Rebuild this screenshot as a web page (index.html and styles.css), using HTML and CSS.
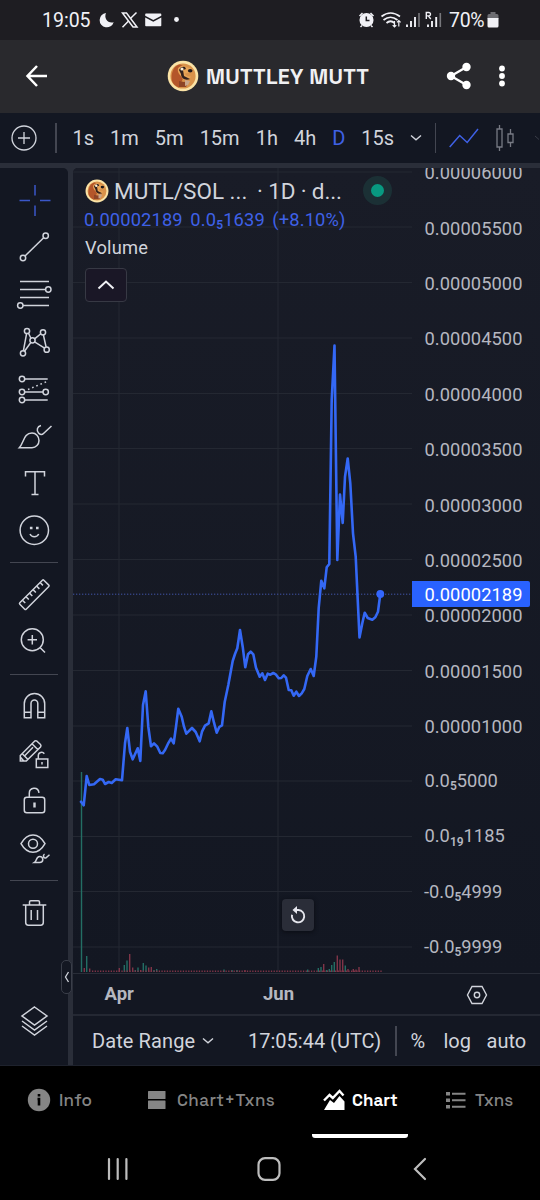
FILE: index.html
```html
<!DOCTYPE html>
<html lang="en">
<head>
<meta charset="utf-8">
<title>MUTTLEY MUTT</title>
<link rel="stylesheet" href="styles.css">
</head>
<body>
<svg class="defs" width="0" height="0" aria-hidden="true">
  <symbol id="coin" viewBox="0 0 32 32">
    <circle cx="16" cy="16" r="15.300" fill="#fbe3a6"/>
    <circle cx="16" cy="16" r="12.600" fill="#d9924a"/>
    <path d="M5 21C3.500 13 7 5 13 4.500l4 2-4 6 3 6-4 9C8 26 6 24 5 21z" fill="#b4562a"/>
    <path d="M11 8.500c2-3 6-3.500 8-1.500l5 1.500c2 1 1 4-1 4l-5 1c1 3 4 3 6 3-2 4-7 5-9 1-2-3-5-5-4-9z" fill="#e9a557"/>
    <path d="M12 10c1-3 4-4 6-3l1 2-3 1 1 6 6 3c-5 2-9-1-9-5z" fill="#33201c"/>
    <ellipse cx="23.200" cy="10.800" rx="2.300" ry="1.700" fill="#21191b"/>
    <circle cx="15" cy="9" r="1.600" fill="#fff1d6"/>
    <path d="M12 21l5 1 5-1-3 6h-7z" fill="#8e4426"/>
    <path d="M18 20l5 1-2 4-3 1z" fill="#c9a68c"/>
  </symbol>
</svg>

<header class="status">
  <span class="clock">19:05</span>
  <svg class="status-left" width="84" height="20" viewBox="98 10 84 20" fill="#f1f1f6">
    <path d="M106 13a7.200 7.200 0 1 0 7.700 9.300c-6 1.500-10-4-7.700-9.300z"/>
    <path d="M122.500 13h4l10.500 14h-4z" fill="none" stroke="#f1f1f6" stroke-width="1.500"/>
    <path d="M136.500 12.500l-6.300 6.300M128.300 21.200l-5.800 6" stroke="#f1f1f6" stroke-width="1.500"/>
    <path d="M146 13.500h14.500q.8 0 .8.800v1.500l-8 4.300-8.100-4.300v-1.500q0-.8.800-.8zM145.200 17.500l8.100 4.200 8-4.200v8q0 .8-.8.800H146q-.8 0-.8-.8z"/>
    <circle cx="176.500" cy="19.500" r="2.400"/>
  </svg>
  <svg class="status-right" width="86" height="22" viewBox="356 9 86 22" fill="none" stroke="#f1f1f6" stroke-width="1.500">
    <circle cx="366.500" cy="20" r="6.300" fill="#f1f1f6"/>
    <path d="M359.500 16l3-3M373.500 16l-3-3M362 25.500l-1.500 1.500M371 25.500l1.500 1.500"/>
    <path d="M366.300 16.500v4h3.200" stroke="#1e1d22"/>
    <path d="M381.500 16.500q9-7 18.500 0M383.500 20q7-5.500 14 0M386.500 23q4-3.500 8 0" stroke-width="1.700"/>
    <path d="M394.500 21v6m-1.800-1.800 1.800 1.800 1.800-1.800M398.800 26.500v-6m-1.800 1.800 1.800-1.800 1.800 1.800" stroke-width="1.200"/>
    <path d="M407 24.500V27M411 21v6M415 17v10" stroke-width="1.900"/><path d="M419 13v14" stroke="#77777c" stroke-width="1.600"/>
    <path d="M428 24.500V27M432 21v6M436.200 17v10" stroke-width="1.900"/><path d="M440.300 13v14" stroke="#77777c" stroke-width="1.600"/>
    <path d="M426.300 19v-6.500h2.500a1.700 1.700 0 0 1 0 3.400h-2.500m2 0 2.500 3.100" stroke-width="1.400"/>
  </svg>
  <span class="battery">70%</span>
  <svg width="12" height="18" viewBox="0 0 12 18"><path d="M3.500 1h5v2H10q1.500 0 1.500 1.500V8H.5V4.500Q.5 3 2 3h1.500z" fill="#6d6d72"/><path d="M.5 7h11v8q0 1.500-1.500 1.500H2Q.5 16.500.5 15z" fill="#f1f1f6"/></svg>
</header>

<div class="titlebar">
  <svg class="back" width="24" height="24" viewBox="0 0 24 24" fill="none" stroke="#fff" stroke-width="2.500"><path d="M22 12H3M12 2 2.500 12 12 22"/></svg>
  <div class="token"><svg width="32" height="32"><use href="#coin"/></svg><h1>MUTTLEY MUTT</h1></div>
  <svg class="share" width="26" height="28" viewBox="0 0 26 28" fill="#fff"><path d="M20.500 5 5 14l15.500 9" fill="none" stroke="#fff" stroke-width="2.300"/><circle cx="20.500" cy="5" r="4.200"/><circle cx="5" cy="14" r="4.200"/><circle cx="20.500" cy="23" r="4.200"/></svg>
  <svg class="more" width="8" height="24" viewBox="0 0 8 24" fill="#fff"><circle cx="4" cy="4.500" r="2.900"/><circle cx="4" cy="12" r="2.900"/><circle cx="4" cy="19.500" r="2.900"/></svg>
</div>

<nav class="intervals">
  <svg class="add" width="28" height="28" viewBox="0 0 28 28" fill="none" stroke="#d1d4dc" stroke-width="1.300"><circle cx="14" cy="14" r="12"/><path d="M14 8v12M8 14h12"/></svg>
  <i class="rule"></i>
  <div class="interval-list">
    <span>1s</span><span>1m</span><span>5m</span><span>15m</span><span>1h</span><span>4h</span><span class="on">D</span><span>15s</span>
  </div>
  <svg class="caret" width="12" height="8" viewBox="0 0 12 8" fill="none" stroke="#d1d4dc" stroke-width="1.400"><path d="M1 1.500 6 5.800l5-4.300"/></svg>
  <i class="rule"></i>
  <svg class="line-type" width="30" height="20" viewBox="0 0 30 20" fill="none" stroke="#3f61e6" stroke-width="1.500"><path d="m.7 19 10-11.500 7.500 7L29 1"/></svg>
  <svg class="candles" width="22" height="28" viewBox="0 0 22 28" fill="none" stroke="#777a84" stroke-width="1.300"><path d="M3 5h5v18H3zM5.500 1v4M5.500 23v4M14 10h5v8.500h-5zM16.500 5v5M16.500 18.500V23"/></svg>
  <svg class="cut-caret" width="6" height="6" viewBox="0 0 6 6" fill="none" stroke="#3a3d48"><path d="m1 1 4 3.500"/></svg>
</nav>

<main class="workspace">
  <aside class="tools">
    <div class="group">
      <svg viewBox="0 0 40 40" class="blue"><path d="M21 5v10.500M21 25.500V36M5.500 20.500H16M26 20.500h10.500"/></svg>
      <svg viewBox="0 0 40 40"><path d="M11 29 29.700 10.700"/><circle cx="9" cy="31" r="2.700"/><circle cx="31.700" cy="8.700" r="2.700"/></svg>
      <svg viewBox="0 0 40 40"><path d="M6 7.500h29M6 15.500h25.600M6 23.500h29M9 31.500h26"/><circle cx="34.300" cy="15.500" r="2.700"/><circle cx="6.300" cy="31.500" r="2.700"/></svg>
      <svg viewBox="0 0 40 40"><path d="M9.400 28.600 12.600 11.700M14.500 11.200l2.300 4.800M20.600 16.900l6.200-5.200M29.400 13l2.700 12M20.600 19.800l10 6.300M16.800 20.500l-6.300 8.700"/><circle cx="13" cy="9" r="2.600"/><circle cx="29" cy="10.300" r="2.600"/><circle cx="18.500" cy="18.300" r="2.600"/><circle cx="9" cy="31.300" r="2.600"/><circle cx="32.700" cy="27.700" r="2.600"/></svg>
      <svg viewBox="0 0 40 40"><path d="M10.700 10h23M10.700 23H29M10.700 31h23"/><circle cx="8" cy="10" r="2.700"/><circle cx="8" cy="23" r="2.700"/><circle cx="31.700" cy="23" r="2.700"/><circle cx="8" cy="31" r="2.700"/><path d="M14 20.500 33 12.500" stroke-dasharray="1.600 2.900"/></svg>
      <svg viewBox="0 0 40 40"><path d="M5.300 31.700C10 27 9.500 17 18 17c4 0 7 3.500 7 7.500 0 4-3 7.200-7 7.200zM27 9.500c-4 1-4.700 4.800-2.500 7.500 1.500 1.800 3.500 2 5 .5L37.500 10"/></svg>
      <svg viewBox="0 0 40 40"><path d="M11.500 13.500V8.700h19v4.800M21 8.700v22.800M17.500 31.500h7"/></svg>
      <svg viewBox="0 0 40 40"><circle cx="20.300" cy="20.300" r="14.200"/><path d="M16 24c1.500 3.500 7.200 3.500 8.700 0"/><path d="M15.900 18h2.600M22 18h2.600" stroke-width="2.600"/></svg>
    </div>
    <i class="divider"></i>
    <div class="group second">
      <svg viewBox="0 0 40 40"><g transform="rotate(-45 20.300 19.700)"><rect x="3.300" y="15.200" width="34" height="9" rx="1"/><path d="M8 15.200v4M13 15.200v4M18 15.200v4M23 15.200v4M28 15.200v4M33 15.200v4"/></g></svg>
      <svg viewBox="0 0 40 40"><circle cx="18.300" cy="18.700" r="11"/><path d="m26 26.500 5 5M18.300 14v9.400M13.600 18.700H23"/></svg>
    </div>
    <i class="divider"></i>
    <div class="group third">
      <svg viewBox="0 0 40 40"><path d="M10.300 31.700v-14a10.200 10.200 0 0 1 20.400 0v14h-6.900V17.500a3.400 3.400 0 0 0-6.800 0v14.200zM10.300 26.300H17M23.800 26.300h6.900"/></svg>
      <svg viewBox="0 0 40 40"><path d="M6.300 27v-5.500L20.500 7.200q1.300-1 2.500 0l3.500 3.300q1 1.200 0 2.500L12.300 27zM18 9.800l6 6M8.500 20l5 5M19 13.200 10.500 22M6.300 23l3.500 4"/><path d="M22.300 25h11.500v8.500H22.300zM24.300 25v-3.500a3.300 3.300 0 0 1 6-1.800M28 28v2.500"/></svg>
      <svg viewBox="0 0 40 40"><rect x="10.300" y="16.300" width="20.400" height="15.400" rx="2.500"/><path d="M15.300 16.300v-4c0-6 8.700-7 9.700-.5"/><path d="M20.500 21.500v5" stroke-width="2.400"/></svg>
      <svg viewBox="0 0 40 40"><path d="M7 14.700c6.500-11.500 17.500-11.500 24 0-6.500 11.500-17.500 11.500-24 0z"/><circle cx="19" cy="14.700" r="4.500"/><path d="M20.500 33.500c2.500-1.500 1.500-6 5-6 2 0 3.300 1.500 3.300 3 0 1.800-1.300 3-3.300 3zM30.500 25c-2.200 1.500-.5 5 1.500 3.800l3.500-3"/></svg>
    </div>
    <i class="divider"></i>
    <div class="group fourth">
      <svg viewBox="0 0 40 40"><path d="M8.700 13h23.600M15.500 13v-3q0-1.300 1.300-1.300h7.400q1.300 0 1.300 1.300v3M11.700 13v17.500q0 2.700 2.700 2.700h12.200q2.700 0 2.700-2.700V13M17.200 18v10M23.500 18v10"/></svg>
      <svg viewBox="0 0 40 40" class="layers"><path d="M20.500 6 33 15 20.500 24 8 15zM8 20l12.500 9L33 20M8 25l12.500 9L33 25"/></svg>
    </div>
  </aside>

  <section class="chart-area">
    <div class="plot">
      <svg class="chart" width="467" height="805" viewBox="73 168 467 805">
        <path class="grid" d="M73 172h339M73 227h339M73 282.500h339M73 338h339M73 393.500h339M73 448.500h339M73 504h339M73 559.500h339M73 615h339M73 670.500h339M73 726h339M73 781h339M73 836.500h339M73 891.500h339M73 947h339M119 168v804M278 168v804"/>
        <path class="up" d="M81.500 972V772M86.700 972v-16M124.300 972v-7M127 972v-11.500M135.300 972v-2M138 972v-4.500M143.300 972v-9M146 972v-6.500M154 972v-2M156.700 972v-3M224 972v-2.500M232 972v-2M237 972v-2M307.700 972v-2.500M318.300 972v-4M321 972v-5M326.700 972v-2M329.300 972v-3M331.700 972v-7M334.300 972v-10M345.300 972v-6.500"/>
        <path class="down" d="M84.300 972v-4M89.700 972v-3.500M119.300 972v-4M129.700 972v-18M132.700 972v-4.500M140.700 972v-2M148.700 972v-4.500M151.300 972v-5M245 972v-2M323.700 972v-8M337.300 972v-16.500M340 972v-12.500M342.700 972v-12.500M348 972v-3M353.300 972v-3M356 972v-2.500M359 972v-5"/>
        <path class="down" d="M92 971.300H382" stroke-dasharray="1.300 1.370"/>
        <path class="level" d="M73 594.200h339"/>
        <polyline class="price" points="81,801.700 83.700,805.300 86.700,776 89.300,785 94,784.300 100,779 102.700,779.700 105,784 108.700,782 111.700,783 115.700,779.300 122,780.300 125,743.300 127.300,728 130,751.700 132.700,759.300 137.700,748.300 140.300,761 143,705 145.700,691.300 148.300,726.700 151,746.300 154,743.300 157.300,746.700 160.300,753 162.700,753.300 165,750 168,743.700 171,738.700 173.700,743.300 176,726.700 178.300,708.700 181.700,716.700 184,726.700 186.300,733.700 192,728 195.700,732 199.700,741.300 202,731.700 205,725.700 208.700,723.300 211.300,711.300 214,722.700 216.700,732.700 219.300,727 222,725.300 224.700,702 228.300,685 232.700,661 235,654 237.300,648.300 240,630 242.700,646.700 245.300,667.300 248,654.300 250.700,651.700 253.300,654.300 256,667.700 259.700,676.700 262.300,673.300 265,680 267.700,673.700 270.300,674.700 273.300,673 275.700,674.300 278.700,678.300 281.300,678 283.700,675.300 286,677.700 288.700,690 291.300,690.300 293.700,695.700 296.300,691.700 299,696 301.700,693.300 304.300,689 307.300,676 310.700,669 313.700,676 316.300,656.700 318.700,608 321.300,580.700 324.300,588.300 326.700,567.300 329.300,564 331.700,400 334.500,345.500 337.300,560 340,494.500 342.700,523 345,476.700 347.700,458.500 350.300,483.300 353,533.300 355.700,556.700 359.500,637.500 362.300,623.300 364.700,612.700 367.700,618 372.300,619.700 375.300,617.300 378,611.700 380.300,594"/>
        <circle cx="380.300" cy="594" r="3.900" fill="#3366ff"/>
        <g class="axis">
          <text x="424.500" y="179" textLength="98">0.00006000</text>
          <text x="424.500" y="234.500" textLength="98">0.00005500</text>
          <text x="424.500" y="290" textLength="98">0.00005000</text>
          <text x="424.500" y="345" textLength="98">0.00004500</text>
          <text x="424.500" y="400.500" textLength="98">0.00004000</text>
          <text x="424.500" y="456" textLength="98">0.00003500</text>
          <text x="424.500" y="511.500" textLength="98">0.00003000</text>
          <text x="424.500" y="567" textLength="98">0.00002500</text>
          <text x="424.500" y="622" textLength="98">0.00002000</text>
          <text x="424.500" y="677.500" textLength="98">0.00001500</text>
          <text x="424.500" y="733" textLength="98">0.00001000</text>
          <text x="424.500" y="786.500">0.0<tspan class="sub" dy="3.500">5</tspan><tspan dy="-3.500">5000</tspan></text>
          <text x="424.500" y="842">0.0<tspan class="sub" dy="3.500">19</tspan><tspan dy="-3.500">1185</tspan></text>
          <text x="424" y="897.500">-0.0<tspan class="sub" dy="3.500">5</tspan><tspan dy="-3.500">4999</tspan></text>
          <text x="424" y="952.500">-0.0<tspan class="sub" dy="3.500">5</tspan><tspan dy="-3.500">9999</tspan></text>
          <path d="M412 581h116q2 0 2 2v22q0 2-2 2H412z" fill="#2962ff"/>
          <text x="424.500" y="601" textLength="98" class="current">0.00002189</text>
        </g>
      </svg>
      <div class="legend">
        <div class="pair">
          <svg width="24" height="24"><use href="#coin"/></svg>
          <span class="symbol">MUTL/SOL ...</span><span class="detail">· 1D · d...</span>
          <i class="live"></i>
        </div>
        <div class="values"><span>0.00002189</span><span>0.0<small>5</small>1639</span><span>(+8.10%)</span></div>
        <div class="volume">Volume</div>
        <div class="collapse"><svg width="18" height="10" viewBox="0 0 18 10" fill="none" stroke="#f0f1f5" stroke-width="2"><path d="m1.500 8.500 7.500-7 7.500 7"/></svg></div>
      </div>
      <div class="reset"><svg width="18" height="18" viewBox="0 0 18 18" fill="none" stroke="#e6e7ee" stroke-width="1.900"><path d="M3 8.800A6.200 6.200 0 1 0 9.500 4H6"/><path d="M8 0v8L3.500 4z" fill="#e6e7ee" stroke="none"/></svg></div>
    </div>
    <div class="timeline">
      <b>Apr</b><b>Jun</b>
      <svg width="22" height="20" viewBox="0 0 22 20" fill="none" stroke="#d1d4dc" stroke-width="1.400"><path d="M6 1.500h10L20.500 10 16 18.500H6L1.500 10z"/><circle cx="11" cy="10" r="2.700"/></svg>
    </div>
    <div class="range">
      <span class="date">Date Range</span>
      <svg width="12" height="8" viewBox="0 0 12 8" fill="none" stroke="#d1d4dc" stroke-width="1.400"><path d="M1 1.500 6 5.800l5-4.300"/></svg>
      <span class="utc">17:05:44 (UTC)</span>
      <i class="rule"></i>
      <span class="pct">%</span><span class="log">log</span><span>auto</span>
    </div>
  </section>
  <div class="grip"><svg width="6" height="12" viewBox="0 0 6 12" fill="none" stroke="#d1d4dc" stroke-width="1.300"><path d="M4.500 1 1.500 6l3 5"/></svg></div>
</main>

<nav class="tabs">
  <div class="tab info"><svg width="24" height="24" viewBox="0 0 24 24"><circle cx="12" cy="12" r="11.200" fill="#858585"/><path d="M12 6v2.500M10.500 11H12v6.500" stroke="#000" stroke-width="2.600" fill="none"/></svg><span>Info</span></div>
  <div class="tab both"><svg width="18" height="20" viewBox="0 0 18 20" fill="#858585"><rect x="0" y="1" width="17.500" height="8" rx=".5"/><rect x="0" y="10.500" width="17.500" height="8.500" rx=".5"/></svg><span>Chart+Txns</span></div>
  <div class="tab current"><svg width="22" height="22" viewBox="0 0 22 22"><path d="M1 11.500 6.500 6l3.300 3L16.500 2l4 4.500" fill="none" stroke="#fff" stroke-width="2.400"/><path d="M1 21 7 11l4 3 5.500-7 5 5.500V21z" fill="#fff"/></svg><span>Chart</span></div>
  <div class="tab txns"><svg width="20" height="18" viewBox="0 0 20 18" fill="#858585"><path d="M0 1h4v3.500H0zM0 7.500h4V11H0zM0 14h4v3.500H0zM6 1.800h13.500v2H6zM6 8.300h13.500v2H6zM6 14.800h13.500v2H6z"/></svg><span>Txns</span></div>
</nav>
<footer class="system">
  <svg width="22" height="24" viewBox="0 0 22 24" stroke="#bdbdbd" stroke-width="2.200" stroke-linecap="round"><path d="M2 2v20M10.700 2v20M19.400 2v20"/></svg>
  <svg class="home" width="24" height="24" viewBox="0 0 24 24" fill="none" stroke="#bdbdbd" stroke-width="2.200"><rect x="1.500" y="1.200" width="21" height="21.600" rx="6.500"/></svg>
  <svg class="sysback" width="14" height="24" viewBox="0 0 14 24" fill="none" stroke="#bdbdbd" stroke-width="2.200" stroke-linecap="round"><path d="m12 2-10 10 10 10"/></svg>
</footer>
</body>
</html>
```
FILE: styles.css
```css
* { box-sizing: border-box; }
body { margin: 0; width: 540px; height: 1200px; overflow: hidden; background: #000; color: #d1d4dc; font-family: Roboto, "Liberation Sans", sans-serif; white-space: nowrap; }
svg { display: block; flex: none; }
.defs { position: absolute; }
i { display: block; flex: none; }

.status { display: flex; align-items: center; height: 40px; padding-left: 42px; background: #1e1d22; color: #f1f1f6; font-size: 19.500px; }
.clock { width: 56px; }
.status-left { margin-right: 174px; }
.status-right { margin-right: 7px; }
.battery { width: 38px; letter-spacing: -0.300px; }

.titlebar { display: flex; align-items: center; height: 73px; padding: 0 0 1px 25px; background: #29292d; }
.token { display: flex; align-items: center; gap: 7px; width: 397px; padding-left: 118px; }
.token h1 { margin: 0; color: #f0f0f2; font: 700 21.500px "Space Grotesk", Inter, "Liberation Sans", sans-serif; letter-spacing: 0.300px; }
.share { margin: 0 26px 0 0; }

.intervals { display: flex; align-items: center; height: 50px; padding-left: 10px; background: #131722; font-size: 20px; }
.rule { width: 1.500px; height: 30px; background: #434651; }
.add { margin-right: 17px; }
.interval-list { display: flex; gap: 16px; width: 340px; margin-left: 16px; }
.interval-list .on { color: #3f61e6; }
.caret { margin-right: 13px; }
.line-type { margin: 0 15px 0 13px; }
.candles { margin-right: 18px; }

.workspace { position: relative; display: flex; gap: 5px; height: 903px; padding-top: 5px; background: #2a2e39; border-bottom: 1px solid #1e222d; }
.tools { width: 68px; background: #131722; border-radius: 0 5px 0 0; }
.group { display: flex; flex-direction: column; padding-left: 14px; height: 386px; padding-top: 12px; gap: 7.200px; }
.group svg { width: 40px; height: 40px; fill: none; stroke: #d1d4dc; stroke-width: 1.500px; }
.group .blue { stroke: #3b57c9; }
.divider { width: 48px; height: 1.500px; margin: 7.500px 0 0 10px; background: #434651; }
.second { height: 103px; gap: 6px; padding-top: 12px; }
.third { height: 197px; gap: 7.500px; padding-top: 11px; }
.fourth { height: 150px; padding-top: 11px; gap: 69px; }

.chart-area { width: 467px; background: #131722; border-radius: 5px 0 0 0; overflow: hidden; }
.plot { position: relative; height: 805px; background: linear-gradient(#191c27, #131722); }
.grid { stroke: #242832; fill: none; }
.up { stroke: #236e64; stroke-width: 1.400px; }
.down { stroke: #803548; stroke-width: 1.400px; }
.level { stroke: #4054a8; stroke-dasharray: 1.300 1.700; }
.price { fill: none; stroke: #3468f5; stroke-width: 2.600px; stroke-linejoin: round; stroke-linecap: round; }
.axis text { fill: #b5b7c0; font-size: 18.300px; }
.axis .sub { font-size: 12px; font-weight: 600; }
.axis .current { fill: #fff; }

.legend { position: absolute; left: 12px; top: 8px; }
.pair { display: flex; align-items: center; height: 29px; font-size: 22.500px; }
.symbol { width: 143px; margin-left: 5px; letter-spacing: 0; }
.detail { width: 106px; letter-spacing: -0.150px; }
.live { width: 29px; height: 29px; background: #089981; border: 8px solid #1b3035; border-radius: 50%; }
.values { display: flex; height: 28px; margin-left: -1px; line-height: 29px; font-size: 18.300px; letter-spacing: 0.150px; color: #3f61e6; gap: 7.500px; }
.values small { font-size: 12px; font-weight: 600; position: relative; top: 3px; }
.volume { height: 31px; line-height: 30px; font-size: 18.300px; letter-spacing: 0.200px; }
.collapse { display: flex; align-items: center; justify-content: center; width: 42px; height: 34px; margin-top: 4px; background: #1a1726; border: 1px solid #373944; border-radius: 4px; }
.reset { position: absolute; left: 209px; top: 731px; display: flex; align-items: center; justify-content: center; width: 32px; height: 32px; background: #2a2d38; border-radius: 4px; box-shadow: 0 1px 4px #0a0c13; }

.timeline { display: flex; align-items: center; height: 43px; border-top: 1px solid #292d38; border-bottom: 2px solid #242833; padding-left: 31.500px; color: #b5b7c0; font-size: 18.500px; }
.timeline b { width: 158.500px; }
.timeline b + b { width: 203px; }
.timeline svg { margin-top: 2px; }
.range { display: flex; align-items: center; height: 49px; padding-left: 19px; font-size: 20px; }
.date { width: 110px; letter-spacing: 0.100px; }
.utc { width: 147px; margin-left: 34px; }
.pct { width: 33px; margin-left: 14px; }
.log { width: 43px; }
.grip { position: absolute; left: 61px; top: 797px; display: flex; align-items: center; justify-content: center; width: 11px; height: 34px; background: #131722; border: 1px solid #3a3e49; border-radius: 5px; }

.tabs { display: flex; height: 72px; color: #858585; font: 500 17px "Space Grotesk", Inter, sans-serif; }
.tab { display: flex; align-items: center; height: 67px; }
.info { width: 120px; padding-left: 27px; gap: 8px; }
.both { width: 192px; padding-left: 28px; gap: 11px; }
.tab.current { width: 96px; height: 72px; padding: 0 0 1px 11px; gap: 7px; color: #fff; border-bottom: 4px solid #fff; border-radius: 3px; font-weight: 600; }
.txns { width: 132px; padding-left: 38px; gap: 9px; }
.both span { letter-spacing: 0.400px; }
.info span { letter-spacing: 0.300px; }
.system { display: flex; align-items: center; height: 62px; padding-left: 107px; }
.home { margin-left: 128px; }
.sysback { margin-left: 132px; }
```
